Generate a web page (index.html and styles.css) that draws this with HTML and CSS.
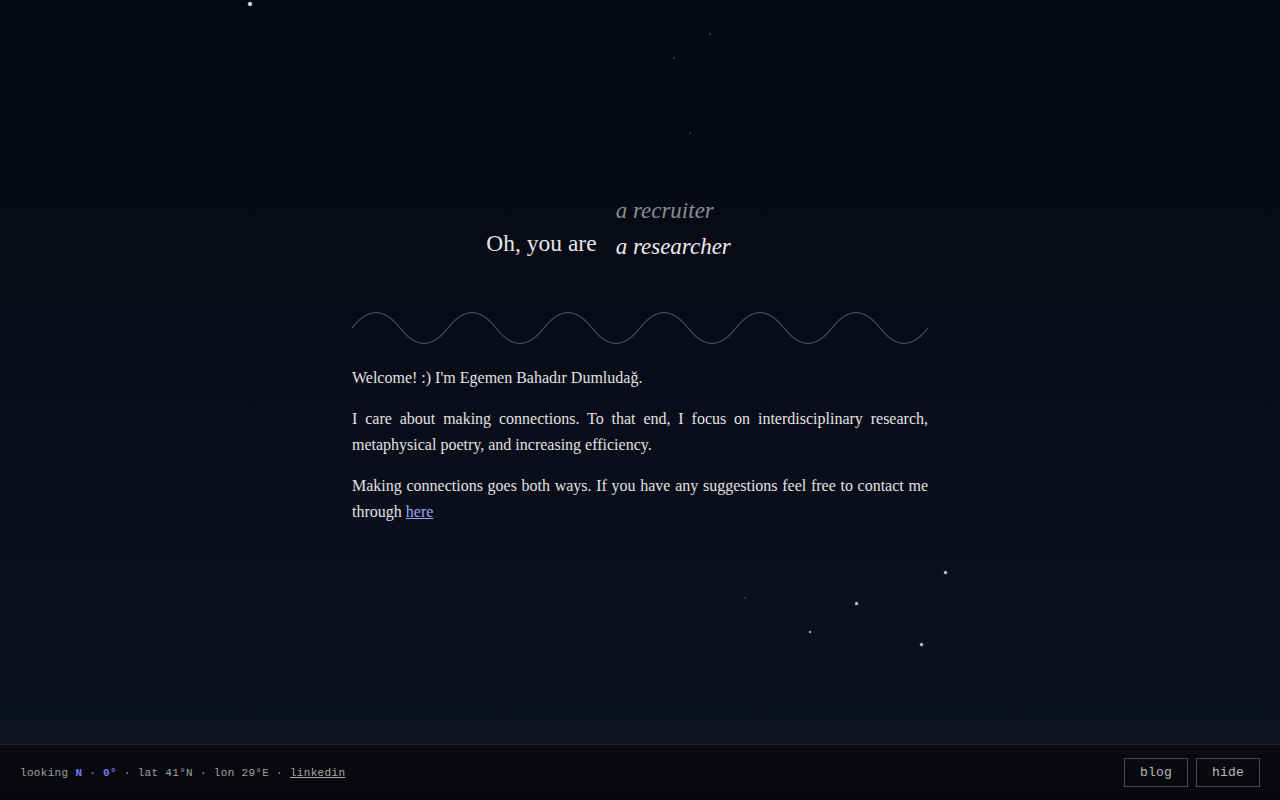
FILE: index.html
```html
<!DOCTYPE html>
<html lang="en">
<head>
<meta charset="utf-8">
<title>Egemen Bahadır Dumludağ</title>
<link rel="stylesheet" href="styles.css">
</head>
<body>
<div class="sky">
  <span class="star bright" style="left:248px;top:2px"></span>
  <span class="star faint" style="left:709px;top:33px"></span>
  <span class="star faint" style="left:673px;top:57px"></span>
  <span class="star faint" style="left:689px;top:132px"></span>
  <span class="star dim" style="left:640px;top:244px"></span>
  <span class="star" style="left:944px;top:571px"></span>
  <span class="star" style="left:855px;top:602px"></span>
  <span class="star faint" style="left:744px;top:597px"></span>
  <span class="star small" style="left:809px;top:631px"></span>
  <span class="star" style="left:920px;top:643px"></span>
</div>
<main class="main">
  <h1 class="intro">
    <span class="intro-static">Oh, you are</span>
    <span class="intro-words">
      <span class="word word-old">a recruiter</span>
      <span class="word word-current">a researcher</span>
    </span>
  </h1>
  <svg class="wave" width="576" height="36" viewBox="0 0 576 36" aria-hidden="true">
    <path d="M0 17 q 24 -31 48 0 t 48 0 t 48 0 t 48 0 t 48 0 t 48 0 t 48 0 t 48 0 t 48 0 t 48 0 t 48 0 t 48 0" fill="none" stroke="#4d515c" stroke-width="1.1"/>
  </svg>
  <section class="content">
    <p>Welcome! :) I'm Egemen Bahadır Dumludağ.</p>
    <p>I care about making connections. To that end, I focus on interdisciplinary research, metaphysical poetry, and increasing efficiency.</p>
    <p>Making connections goes both ways. If you have any suggestions feel free to contact me through <a href="#" class="link">here</a></p>
  </section>
</main>
<footer class="footer">
  <div class="status">looking <span class="dir">N · 0°</span> · lat 41°N · lon 29°E · <a href="#" class="status-link">linkedin</a></div>
  <div class="actions">
    <button class="btn">blog</button>
    <button class="btn">hide</button>
  </div>
</footer>
</body>
</html>
```
FILE: styles.css
```css
* { box-sizing: border-box; }
html, body { margin: 0; padding: 0; }
body {
  width: 1280px;
  height: 800px;
  overflow: hidden;
  display: flex;
  flex-direction: column;
  background: linear-gradient(180deg, #060812 0%, #090d19 50%, #0d1220 92%);
  color: #e4e4e4;
  font-family: "Liberation Serif", "Times New Roman", serif;
  position: relative;
}
.sky { position: absolute; inset: 0; pointer-events: none; }
.star {
  position: absolute;
  width: 3px;
  height: 3px;
  border-radius: 50%;
  background: #c9cbd6;
  box-shadow: 0 0 2px rgba(200, 205, 225, 0.5);
}
.star.bright { background: #dfe1ea; width: 4px; height: 4px; }
.star.small { width: 2px; height: 2px; }
.star.faint { width: 2px; height: 2px; background: #3a3e52; box-shadow: none; }
.star.dim { width: 2px; height: 2px; background: #8a8d99; box-shadow: none; }

.main {
  flex: 1;
  display: flex;
  flex-direction: column;
  align-items: center;
  padding-top: 193px;
  position: relative;
}
.intro {
  margin: 0;
  display: flex;
  align-items: flex-end;
  gap: 19px;
  font-weight: normal;
  font-size: 23.5px;
  line-height: 36px;
  color: #e6e6e6;
}
.intro-static { position: relative; top: -4px; }
.intro-words {
  display: flex;
  flex-direction: column;
  width: 178px;
  font-style: italic;
  font-size: 23px;
}
.word { white-space: nowrap; }
.word-old { color: #8b8c90; }
.word-current { color: #ececec; }

.wave { display: block; margin-top: 46px; }

.content {
  width: 576px;
  margin-top: 18px;
  font-size: 16px;
  line-height: 26px;
  color: #e2e2e2;
}
.content p { margin: 0 0 15px; text-align: justify; }
.link { color: #9aa6f2; text-decoration: underline; }

.footer {
  height: 56px;
  flex: none;
  display: flex;
  align-items: center;
  justify-content: space-between;
  padding: 0 20px;
  border-top: 1px solid #1b1f2e;
  background: linear-gradient(180deg, #0a0b10 0%, #07080b 100%);
  font-family: "Liberation Mono", "Courier New", monospace;
  position: relative;
}
.status {
  font-size: 11px;
  letter-spacing: 0.32px;
  color: #a0a0a0;
  padding-top: 1px;
}
.dir { color: #717ce8; font-weight: bold; }
.status-link { color: #a8a8a8; text-decoration: underline; }
.actions { display: flex; gap: 8px; }
.btn {
  font-family: "Liberation Mono", "Courier New", monospace;
  font-size: 13px;
  line-height: 15px;
  color: #b8b8b8;
  background: transparent;
  border: 1px solid #4a4a4d;
  padding: 6px 15px;
  width: 64px;
  height: 29px;
  letter-spacing: 0.2px;
}
```
